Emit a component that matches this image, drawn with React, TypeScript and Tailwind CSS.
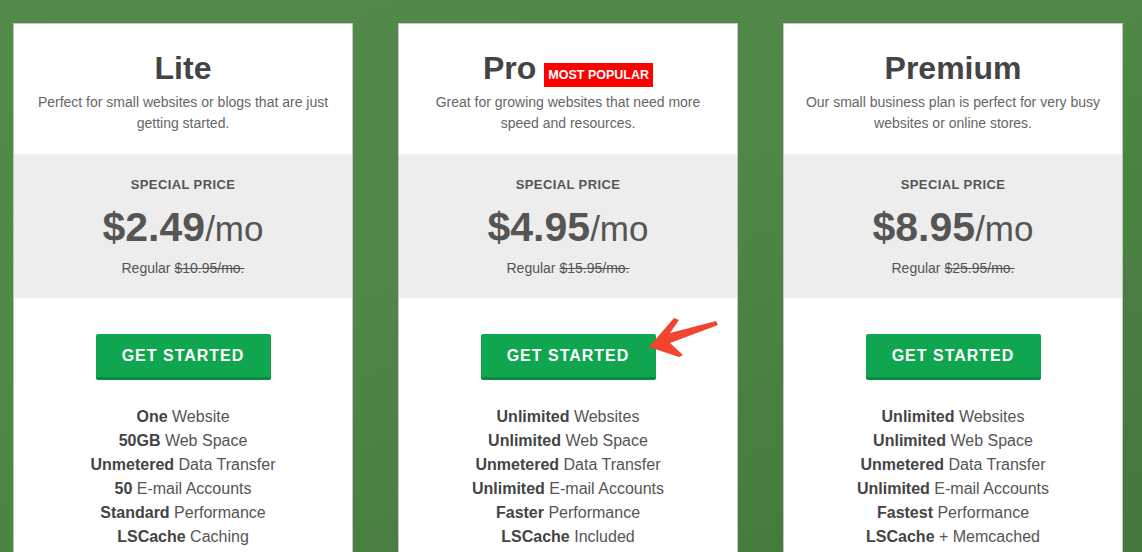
import React from "react";

type Plan = {
  name: string;
  popular?: boolean;
  desc: string[];
  price: string;
  regular: string;
  features: [string, string][];
};

const plans: Plan[] = [
  {
    name: "Lite",
    desc: ["Perfect for small websites or blogs that are just", "getting started."],
    price: "$2.49",
    regular: "$10.95/mo.",
    features: [
      ["One", "Website"],
      ["50GB", "Web Space"],
      ["Unmetered", "Data Transfer"],
      ["50", "E-mail Accounts"],
      ["Standard", "Performance"],
      ["LSCache", "Caching"],
    ],
  },
  {
    name: "Pro",
    popular: true,
    desc: ["Great for growing websites that need more", "speed and resources."],
    price: "$4.95",
    regular: "$15.95/mo.",
    features: [
      ["Unlimited", "Websites"],
      ["Unlimited", "Web Space"],
      ["Unmetered", "Data Transfer"],
      ["Unlimited", "E-mail Accounts"],
      ["Faster", "Performance"],
      ["LSCache", "Included"],
    ],
  },
  {
    name: "Premium",
    desc: ["Our small business plan is perfect for very busy", "websites or online stores."],
    price: "$8.95",
    regular: "$25.95/mo.",
    features: [
      ["Unlimited", "Websites"],
      ["Unlimited", "Web Space"],
      ["Unmetered", "Data Transfer"],
      ["Unlimited", "E-mail Accounts"],
      ["Fastest", "Performance"],
      ["LSCache", "+ Memcached"],
    ],
  },
];

function Arrow() {
  return (
    <svg
      className="absolute left-[166px] top-[-19px]"
      width="76"
      height="46"
      viewBox="0 0 76 46"
    >
      <polygon
        points="2,32 27,3 32,5 23,18 69,6 71,10 23,28 36,40 32,42"
        fill="#f2452f"
      />
    </svg>
  );
}

function Card({ plan }: { plan: Plan }) {
  return (
    <div className="w-[340px] shrink-0 bg-white border border-[#c4c4c4] border-b-0 flex flex-col">
      {/* header */}
      <div className="pt-[24px] pb-[20px] px-4 text-center">
        <div className="flex items-start justify-center gap-[8px] h-[40px]">
          <h2 className="text-[32px] leading-[40px] font-bold text-[#444]">{plan.name}</h2>
          {plan.popular && (
            <span className="bg-[#ff0000] text-white text-[12.5px] font-bold leading-[24px] px-[4px] mt-[15px]">
              MOST POPULAR
            </span>
          )}
        </div>
        <p className="mt-[4px] text-[14px] leading-[21px] text-[#666]">
          {plan.desc[0]}
          <br />
          {plan.desc[1]}
        </p>
      </div>

      {/* price */}
      <div className="bg-[#ededed] h-[144px] pt-[22px] text-center text-[#555]">
        <div className="text-[13px] leading-[18px] font-bold tracking-[0.4px]">SPECIAL PRICE</div>
        <div className="mt-[8px] leading-[50px] h-[50px]">
          <span className="text-[41px] font-bold">{plan.price}</span>
          <span className="text-[35px]">/mo</span>
        </div>
        <div className="mt-[7px] text-[14px] leading-[18px] text-[#555]">
          Regular <span className="line-through">{plan.regular}</span>
        </div>
      </div>

      {/* button + features */}
      <div className="pt-[36px] pb-[20px] text-center">
        <div className="relative w-[175px] mx-auto">
          <button className="w-[175px] h-[46px] rounded-[2px] bg-[#10a64f] border-b-[3px] border-[#0b8a3f] text-white text-[16px] font-bold tracking-[1px]">
            GET STARTED
          </button>
          {plan.popular && <Arrow />}
        </div>
        <ul className="mt-[25px] text-[16px] leading-[24px] text-[#555]">
          {plan.features.map(([b, r], i) => (
            <li key={i}>
              <span className="font-bold text-[#444]">{b}</span> {r}
            </li>
          ))}
        </ul>
      </div>
    </div>
  );
}

export default function App() {
  return (
    <div
      className="w-[1142px] h-[552px] overflow-hidden bg-[linear-gradient(160deg,#528b49_0%,#4e8746_45%,#487f40_75%,#427839_100%)] font-['Liberation_Sans',Arial,sans-serif]"
    >
      <div className="flex gap-[45px] pl-[13px] pt-[23px]">
        {plans.map((p) => (
          <Card key={p.name} plan={p} />
        ))}
      </div>
    </div>
  );
}
